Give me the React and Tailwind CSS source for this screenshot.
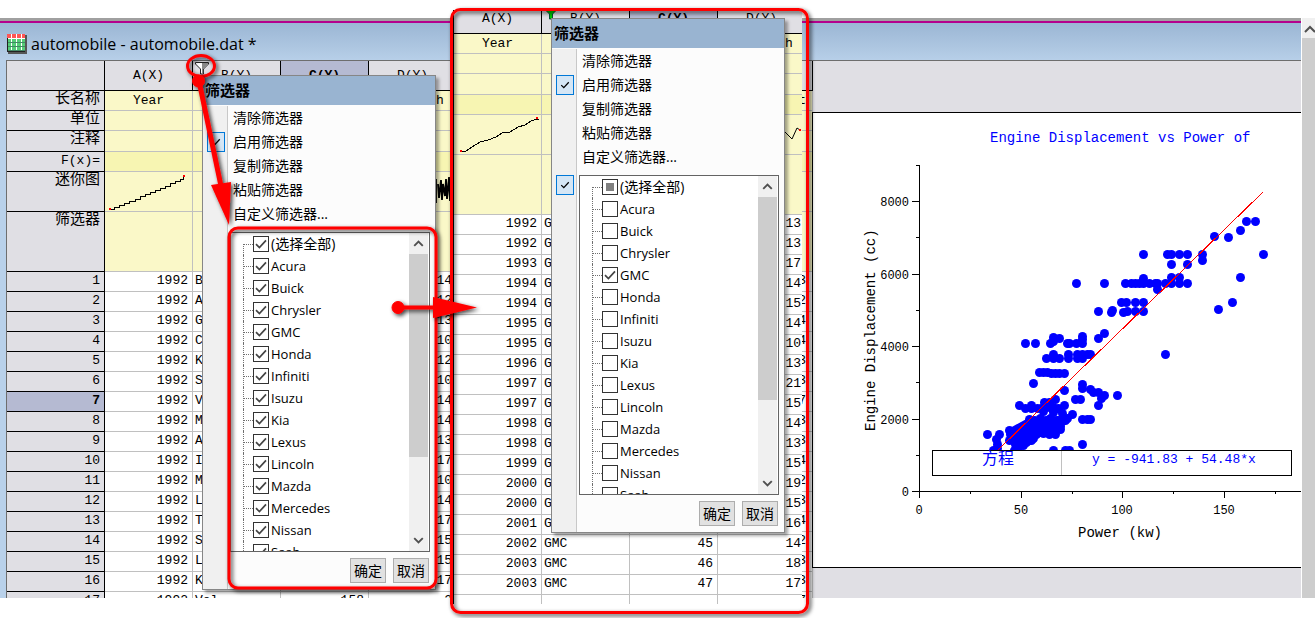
import React from "react";

const MONO = "font-['Liberation_Mono','Noto_Sans_CJK_SC',monospace]";
const UI = "font-['Open_Sans','Noto_Sans_CJK_SC',sans-serif]";

const MAKES = ["Acura", "Buick", "Chrysler", "GMC", "Honda", "Infiniti", "Isuzu", "Kia", "Lexus", "Lincoln", "Mazda", "Mercedes", "Nissan", "Saab"];

const SHEET_ROWS = [
  ["B", "", "14", "3"], ["A", "", "12", "2"], ["G", "", "13", "4"], ["C", "", "10", "4"],
  ["K", "", "12", "3"], ["S", "", "10", "3"], ["V", "", "14", "7"], ["M", "", "14", "3"],
  ["A", "", "13", "3"], ["I", "", "17", "4"], ["M", "", "10", "2"], ["L", "", "14", "3"],
  ["T", "", "17", "4"], ["S", "", "15", "2"], ["L", "", "15", "3"], ["K", "", "17", "3"],
  ["Vol", "158", "2", "7"],
];

const FILTERED_ROWS = [
  [1992, "", 13], [1992, "", 13], [1993, "", 17], [1994, "", 14], [1994, "", 15], [1995, "", 14], [1995, "", 10],
  [1996, "", 13], [1997, "", 21], [1997, "", 15], [1998, "", 14], [1998, "", 13], [1999, "", 15], [2000, "", 19],
  [2000, "", 15], [2001, "", 16], [2002, 45, 14], [2003, 46, 18], [2003, 47, 17],
];

const LABEL_ROWS = [
  { label: "长名称", height: "h-5", names: true },
  { label: "单位", height: "h-5" },
  { label: "注释", height: "h-[21px]" },
  { label: "F(x)=", height: "h-5", formula: true },
  { label: "迷你图", height: "h-10", spark: true },
  { label: "筛选器", height: "h-[60px]" },
];

const POINTS = [
  [1255, 221], [1246, 221], [1240, 230], [1228, 237], [1214, 236], [1263, 254], [1240, 277], [1202, 254], [1202, 260],
  [1187, 254], [1179, 254], [1171, 254], [1167, 254], [1143, 254], [1171, 264], [1187, 264], [1179, 277], [1171, 277],
  [1143, 278], [1076, 283], [1104, 283], [1125, 283], [1131, 283], [1135, 283], [1139, 283], [1143, 283], [1149, 283],
  [1155, 283], [1157, 283], [1165, 283], [1171, 283], [1179, 283], [1187, 283], [1157, 289],
  [1121, 302], [1126, 302], [1135, 302], [1143, 302], [1232, 302], [1218, 309],
  [1098, 311], [1112, 310], [1111, 312], [1123, 312], [1127, 311], [1135, 311], [1143, 311],
  [1104, 333], [1098, 338], [1025, 343], [1035, 343], [1050, 343], [1067, 343], [1069, 343], [1076, 343], [1082, 343],
  [1053, 337], [1059, 338], [1082, 336], [1082, 339], [1053, 341],
  [1046, 358], [1053, 358], [1059, 358], [1068, 358], [1077, 358], [1082, 358], [1053, 354], [1068, 354], [1077, 354],
  [1082, 354], [1087, 354], [1090, 354], [1165, 354],
  [1039, 372], [1043, 372], [1047, 372], [1051, 373], [1055, 373], [1059, 373], [1064, 373],
  [1033, 383], [1064, 390], [1082, 384], [1082, 388], [1090, 389], [1093, 392], [1098, 392], [1104, 395], [1101, 398],
  [1098, 405], [1117, 395], [1075, 399], [1080, 399], [1082, 419], [1087, 419], [1090, 419],
  [1019, 405], [1025, 408], [1031, 405], [1031, 408], [1037, 408], [1041, 408], [1044, 402], [1049, 402], [1055, 399],
  [1043, 411], [1049, 407], [1053, 407], [1058, 408], [1064, 405], [1053, 412], [1062, 413], [1072, 414], [1067, 418],
  [1029, 419], [1034, 420], [1040, 418], [1046, 420], [1050, 418], [1057, 420], [1062, 421], [1065, 420],
  [1025, 425], [1030, 426], [1035, 426], [1040, 425], [1045, 426], [1050, 425], [1055, 426], [1060, 426],
  [1009, 430], [1013, 431], [1021, 430], [1026, 431], [1031, 430], [1036, 431], [1041, 431], [1046, 430], [1050, 431], [1055, 430], [1060, 429],
  [987, 434], [999, 434], [1010, 434], [1015, 436], [1020, 435], [1025, 435], [1030, 436], [1036, 434], [1043, 433], [1049, 434], [1055, 434],
  [996, 439], [1009, 440], [1014, 440], [1019, 440], [1024, 440], [1029, 440], [1033, 438],
  [997, 444], [1015, 444], [1021, 444], [1026, 442], [1031, 440], [1018, 448], [1023, 445],
  [997, 448], [993, 450], [1014, 450], [1053, 450], [1065, 450], [1069, 450], [1082, 444],
];

function Check({ className }) {
  return (
    <svg viewBox="0 0 16 16" className={className} fill="none" stroke="currentColor" strokeWidth="1.7">
      <path d="M3 8.2 6.4 11.6 13 4.4" />
    </svg>
  );
}

function Funnel({ green, className }) {
  return (
    <svg viewBox="0 0 14 14" className={className}>
      <path d="M0.5 1.5h13v1.5L8.5 8v5h-3V8L0.5 3z" fill={green ? "#0c0" : "#fff"} stroke={green ? "#053" : "#222"} />
      {!green && <path d="M7 2h6v1L8.200 7.800V12.500H7z" fill="#888" />}
    </svg>
  );
}

function SparkRising({ stepped }) {
  const d = stepped
    ? "M4 37h5v-2h5v-2h5v-2h5v-2h6v-2h5v-3h5v-2h5v-2h5v-2h5v-2h5v-2h5v-3h5v-2h5v-2h3v-4h2"
    : "M7 36h5l6-4 8-5 8-2 8-3 6-4 8-1 8-5 7-2 6-4 6-2h2";
  const [sx, sy, ex, ey] = stepped ? [4, 36, 78, 3] : [6, 35, 82, 2];
  return (
    <svg viewBox="0 0 87 39" className="block h-[39px] w-[87px]" shapeRendering="crispEdges">
      <path d={d} fill="none" stroke="#000" />
      <rect x={sx} y={sy} width="2" height="2" fill="#f00" />
      <rect x={ex} y={ey} width="2" height="2" fill="#f00" />
    </svg>
  );
}

function SparkNoise({ dense }) {
  return (
    <svg viewBox="0 0 87 39" className="block h-[39px] w-[87px]">
      {dense ? (
        <path d="M67 7v24M69 12l1 14 2-18 1 20 1-16 2 12 1-17 1 20 2-22 1 24 1-16 2 10 1-14 1 18 2-10" fill="none" stroke="#000" strokeWidth="1.8" />
      ) : (
        <>
          <path d="M66 16l8 8 5-11 3 2" fill="none" stroke="#000" />
          <rect x="81" y="14" width="2" height="2" fill="#f00" />
        </>
      )}
    </svg>
  );
}

const cell = "border-b border-r border-[#c0c0c0] p-0 align-top";

function headCell(i) {
  return i === 2 ? "bg-[#b5bad2] font-bold" : "bg-[#e0dfe4] font-normal";
}

function Worksheet() {
  return (
    <table className="w-[806px] shrink-0 table-fixed border-separate border-spacing-0 self-start bg-white text-[13px] leading-[18px]">
      <colgroup>
        <col className="w-[98px]" />
        <col className="w-[88px]" />
        <col className="w-[88px]" />
        <col className="w-[88px]" />
        <col className="w-[88px]" />
        <col />
      </colgroup>
      <thead>
        <tr>
          <td className="h-[30px] border-b border-r border-black bg-[#e0dfe4] p-0" />
          {["A(X)", "B(Y)", "C(Y)", "D(Y)", ""].map((name, i) => (
            <th key={i} scope="col" className={"relative h-[30px] border-b border-r border-black p-0 text-center align-middle " + headCell(i)}>
              {name}
              {i === 1 && <Funnel className="absolute left-0.5 top-0 size-3.5" />}
            </th>
          ))}
        </tr>
      </thead>
      <tbody>
        {LABEL_ROWS.map((row) => {
          const tone = row.formula ? " bg-[#f7f5b2]" : " bg-[#faf8c8]";
          return (
            <tr key={row.label}>
              <th
                scope="row"
                className={
                  "border-b border-r border-black bg-[#e0dfe4] p-0 pr-1 text-right align-top font-normal " +
                  (row.formula ? "text-[13px] leading-[18px] " : "text-[15px] leading-[18px] ") +
                  row.height
                }
              >
                {row.label}
              </th>
              <td className={cell + " text-center leading-[19px]" + tone}>{row.names ? "Year" : row.spark && <SparkRising stepped />}</td>
              <td className={cell + tone} />
              <td className={cell + tone} />
              <td className={cell + " text-center leading-[19px]" + tone}>{row.names ? "0~60 mph" : row.spark && <SparkNoise dense />}</td>
              <td className={cell + " pr-1.5 text-right leading-[19px]" + tone}>{row.names ? "t" : ""}</td>
            </tr>
          );
        })}
        {SHEET_ROWS.map(([make, power, accel, last], i) => (
          <tr key={i}>
            <th
              scope="row"
              className={"h-5 border-b border-r border-black p-0 pr-1 text-right align-top " + (i === 6 ? "bg-[#b5bad2] font-bold" : "bg-[#e0dfe4] font-normal")}
            >
              {i + 1}
            </th>
            <td className={cell + " pr-1 text-right"}>1992</td>
            <td className={cell + " pl-0.5"}>{make}</td>
            <td className={cell + " pr-1 text-right"}>{power}</td>
            <td className={cell + " pr-1 text-right"}>{accel}</td>
            <td className={cell + " pr-1.5 text-right"}>{last}</td>
          </tr>
        ))}
      </tbody>
    </table>
  );
}

function FilteredSheet() {
  return (
    <table className="w-[353px] table-fixed border-separate border-spacing-0 border-l border-black bg-white text-[13px] leading-[18px]">
      <thead>
        <tr>
          {["A(X)", "B(Y)", "C(Y)", "D(Y)"].map((name, i) => (
            <th key={name} scope="col" className={"relative h-6 border-b border-r border-black p-0 text-center align-top " + headCell(i)}>
              {name}
              {i === 1 && <Funnel green className="absolute -top-1 left-0.5 size-3.5" />}
            </th>
          ))}
        </tr>
      </thead>
      <tbody>
        {LABEL_ROWS.map((row) => {
          const tone = row.formula ? " bg-[#f7f5b2]" : " bg-[#faf8c8]";
          return (
            <tr key={row.label}>
              <td className={cell + " text-center leading-[19px] " + row.height + tone}>{row.names ? "Year" : row.spark && <SparkRising />}</td>
              <td className={cell + tone} />
              <td className={cell + tone} />
              <td className={cell + " text-center leading-[19px]" + tone}>{row.names ? "0~60 mph" : row.spark && <SparkNoise />}</td>
            </tr>
          );
        })}
        {FILTERED_ROWS.map(([year, power, accel], i) => (
          <tr key={i}>
            <td className={cell + " h-5 pr-1 text-right"}>{year}</td>
            <td className={cell + " pl-0.5"}>GMC</td>
            <td className={cell + " pr-1 text-right"}>{power}</td>
            <td className={cell + " pr-1 text-right"}>{accel}</td>
          </tr>
        ))}
        <tr>
          <td className={cell + " h-5"} />
          <td className={cell} />
          <td className={cell} />
          <td className={cell} />
        </tr>
      </tbody>
    </table>
  );
}

function TickButton({ label }) {
  return (
    <button type="button" aria-label={label} className="flex h-5 w-[18px] items-center justify-center border border-[#0078d7] bg-[#d5e6f5] text-black">
      <Check className="size-3" />
    </button>
  );
}

function FilterList({ isChecked, partial }) {
  const names = ["(选择全部)", ...MAKES];
  return (
    <div className="flex h-80 flex-1 border border-[#646464] bg-white">
      <ul className="h-full flex-1 overflow-hidden">
        {names.map((name, i) => {
          const checked = isChecked(name);
          const mixed = partial && i === 0;
          return (
            <li key={name} className="flex h-[22px]">
              <span className={"ml-3 flex w-2.5 border-l border-dotted border-[#707070] " + (i === 0 ? "h-[11px] items-start self-end" : "h-full items-center")}>
                <span className="w-full border-t border-dotted border-[#707070]" />
              </span>
              <label className={"flex items-center gap-0.5 " + (i === 0 ? "text-sm leading-[22px]" : "text-[13px] leading-[22px]")}>
                <span className="grid size-4 place-items-center text-[#444]">
                  <input type="checkbox" defaultChecked={checked} className="col-start-1 row-start-1 size-4 appearance-none border border-[#333] bg-white" />
                  {checked && <Check className="pointer-events-none col-start-1 row-start-1 size-4" />}
                  {mixed && <span className="pointer-events-none col-start-1 row-start-1 size-2 bg-[#808080]" />}
                </span>
                {name}
              </label>
            </li>
          );
        })}
      </ul>
      <div className="flex w-5 flex-col border-r border-white bg-[#f0f0f0] text-[#505050]">
        <svg viewBox="0 0 20 21" className="h-[21px] w-full" fill="none" stroke="currentColor" strokeWidth="2">
          <path d="M5.5 13 10 8.5 14.5 13" />
        </svg>
        <div className="h-[203px] bg-[#cdcdcd]" />
        <div className="flex-1" />
        <svg viewBox="0 0 20 21" className="h-[21px] w-full" fill="none" stroke="currentColor" strokeWidth="2">
          <path d="M5.5 8 10 12.5 14.5 8" />
        </svg>
      </div>
    </div>
  );
}

function FilterMenu({ isChecked, partial }) {
  const gutter = "flex w-[25px] shrink-0 justify-start border-r border-[#c8c8c8] bg-[#f0f0f0] pl-1";
  return (
    <div className={"w-[234px] border border-[#868686] bg-[#fcfcfc] text-sm text-black shadow-[3px_3px_3px_rgba(0,0,0,0.35)] " + UI}>
      <h2 className="h-[29px] bg-[#99b4d1] pl-0.5 text-[15px] font-bold leading-[29px]">筛选器</h2>
      <div className="pt-px">
        {["清除筛选器", "启用筛选器", "复制筛选器", "粘贴筛选器", "自定义筛选器..."].map((item, i) => (
          <div key={item} className="flex h-6">
            <div className={gutter + " items-center"}>{i === 1 && <TickButton label="启用" />}</div>
            <button type="button" className="flex-1 pl-[5px] text-left leading-6">{item}</button>
          </div>
        ))}
        <div className="flex">
          <div className={gutter + " items-start pt-1.5"}>{partial && <TickButton label="列表" />}</div>
          <div className="flex flex-1 flex-col gap-1.5 py-1.5 pl-0.5 pr-[5px]">
            <div className="flex">
              <FilterList isChecked={isChecked} partial={partial} />
            </div>
            <div className="flex justify-end gap-[7px] pr-px">
              {["确定", "取消"].map((t) => (
                <button key={t} type="button" className="h-[25px] w-9 border border-[#adadad] bg-[#e1e1e1] leading-[23px]">{t}</button>
              ))}
            </div>
          </div>
        </div>
      </div>
    </div>
  );
}

function Graph() {
  const yMajor = [[201, "8000"], [274, "6000"], [346, "4000"], [419, "2000"], [491, "0"]];
  const xMajor = [[919, "0"], [1021, "50"], [1122, "100"], [1224, "150"]];
  return (
    <svg viewBox="813 113 488 454" preserveAspectRatio="xMinYMin slice" className="block h-[454px] w-full">
      <g stroke="#000" shapeRendering="crispEdges">
        <path d="M919.5 165V497M912 491.5H1301" fill="none" />
        {yMajor.map(([y]) => <path key={y} d={`M912 ${y + 0.5}H919`} />)}
        {[165, 237, 310, 382, 455].map((y) => <path key={y} d={`M916 ${y + 0.5}H919`} />)}
        {xMajor.map(([x]) => <path key={x} d={`M${x + 0.5} 491V498`} />)}
        {[970, 1072, 1173, 1275].map((x) => <path key={x} d={`M${x + 0.5} 491V494`} />)}
      </g>
      <g fill="#0000ff">
        {POINTS.map(([x, y], i) => <circle key={i} cx={x + 0.5} cy={y + 0.5} r="4.5" />)}
        <path d="M1010 428L1030 417 1064 416 1062 430 1052 437 1036 437 1022 446 1014 446 1008 440z" />
      </g>
      <path d="M998 450L1263 192" stroke="#f00" fill="none" shapeRendering="crispEdges" />
      <rect x="932.5" y="450.5" width="359" height="25" fill="#fff" stroke="#000" />
      <path d="M1061.5 451V475" stroke="#c0c0c0" />
      <g fontSize="12" textAnchor="end">
        {yMajor.map(([y, t]) => <text key={t} x="909" y={y + 5}>{t}</text>)}
      </g>
      <g fontSize="12" textAnchor="middle">
        {xMajor.map(([x, t]) => <text key={t} x={x} y="514">{t}</text>)}
      </g>
      <text x="1120" y="537" fontSize="14" textAnchor="middle">Power (kw)</text>
      <text transform="translate(875 431) rotate(-90)" fontSize="14">Engine Displacement (cc)</text>
      <g fill="#0000ff">
        <text x="990" y="142" fontSize="14">Engine Displacement vs Power of</text>
        <text x="982" y="464" fontSize="16">方程</text>
        <text x="1092" y="463" fontSize="13">y = -941.83 + 54.48*x</text>
      </g>
    </svg>
  );
}

function SheetIcon() {
  return (
    <svg viewBox="0 0 20 20" className="size-5" shapeRendering="crispEdges">
      <rect x="1" y="1" width="19" height="19" fill="#555" />
      <rect width="18" height="18" fill="#fff" />
      <rect width="18" height="4" fill="#f55" />
      {[5, 9, 13].map((y) => <rect key={y} x="0" y={y} width="18" height="3" fill="#5c7" />)}
      {[4, 9, 14].map((x) => <rect key={x} x={x} y="0" width="1" height="18" fill="#fff" />)}
      {[8, 12, 16].map((y) => <rect key={y} x="0" y={y} width="18" height="1" fill="#486" />)}
      <path d="M0.5 4v14M0 17.5h18" stroke="#222" fill="none" />
    </svg>
  );
}

function Callouts() {
  return (
    <svg viewBox="0 0 820 630" className="pointer-events-none absolute left-0 top-0 h-[630px] w-[820px]" aria-hidden="true">
      <defs>
        <filter id="soft" filterUnits="userSpaceOnUse" x="0" y="0" width="820" height="630">
          <feDropShadow dx="2" dy="2" stdDeviation="2" floodColor="#000" floodOpacity="0.75" />
        </filter>
      </defs>
      <g fill="none" stroke="#f00" strokeWidth="3" filter="url(#soft)">
        <rect x="451.5" y="9.5" width="356" height="603" rx="9" />
        <rect x="229" y="228" width="207" height="360" rx="9" />
        <ellipse cx="201" cy="66" rx="13.5" ry="10.5" />
      </g>
      <g fill="#f00" stroke="#f00" filter="url(#soft)">
        <circle cx="198.500" cy="81" r="6" />
        <path d="M199 81L221 186" strokeWidth="5" />
        <path d="M211 185L231 182 229 225z" stroke="none" />
        <circle cx="398" cy="307.500" r="6" />
        <path d="M398 307.500H436" strokeWidth="4" />
        <path d="M433 297V318L477 307.500z" stroke="none" />
      </g>
    </svg>
  );
}

export default function App() {
  return (
    <main className={"relative h-screen overflow-hidden bg-white pt-[18px] text-black " + MONO}>
      <section className="flex h-[580px] overflow-hidden">
        <div className="flex min-w-0 flex-1 flex-col bg-[#b9d1ea]">
          <div className="h-[3px] shrink-0 bg-[#a0a0a0]" />
          <div className="h-0.5 shrink-0 bg-[#b4008c]" />
          <header className={"flex h-[37px] shrink-0 items-center gap-1 bg-linear-to-b from-[#9bb6d4] to-[#b7cfe8] pl-[7px] pt-1 " + UI}>
            <SheetIcon />
            <h1 className="text-base leading-5">automobile - automobile.dat *</h1>
          </header>
          <div className="ml-1.5 flex min-h-0 flex-1 overflow-hidden border-l border-t border-[#6e6e6e] bg-[#e0dfe4]">
            <Worksheet />
            <div className="-ml-px min-w-0 flex-1 pt-[51px]">
              <div className="border-y border-l border-black bg-white">
                <Graph />
              </div>
            </div>
          </div>
        </div>
        <div className="flex w-3.5 shrink-0 flex-col border-l border-white bg-[#f0f0f0]">
          <svg viewBox="0 0 13 20" className="h-5 w-full" fill="none" stroke="#505050" strokeWidth="2">
            <path d="M3 14 8 9 13 14" />
          </svg>
          <div className="flex-1 bg-[#cdcdcd]" />
        </div>
      </section>

      <div className="absolute left-[202px] top-[75px]">
        <FilterMenu isChecked={() => true} />
      </div>

      <section className="absolute left-[453px] top-2.5 h-[594px] w-[349px] overflow-hidden bg-white">
        <FilteredSheet />
      </section>
      <div className="absolute left-[551px] top-[18px]">
        <FilterMenu isChecked={(name) => name === "GMC"} partial />
      </div>

      <Callouts />
    </main>
  );
}
